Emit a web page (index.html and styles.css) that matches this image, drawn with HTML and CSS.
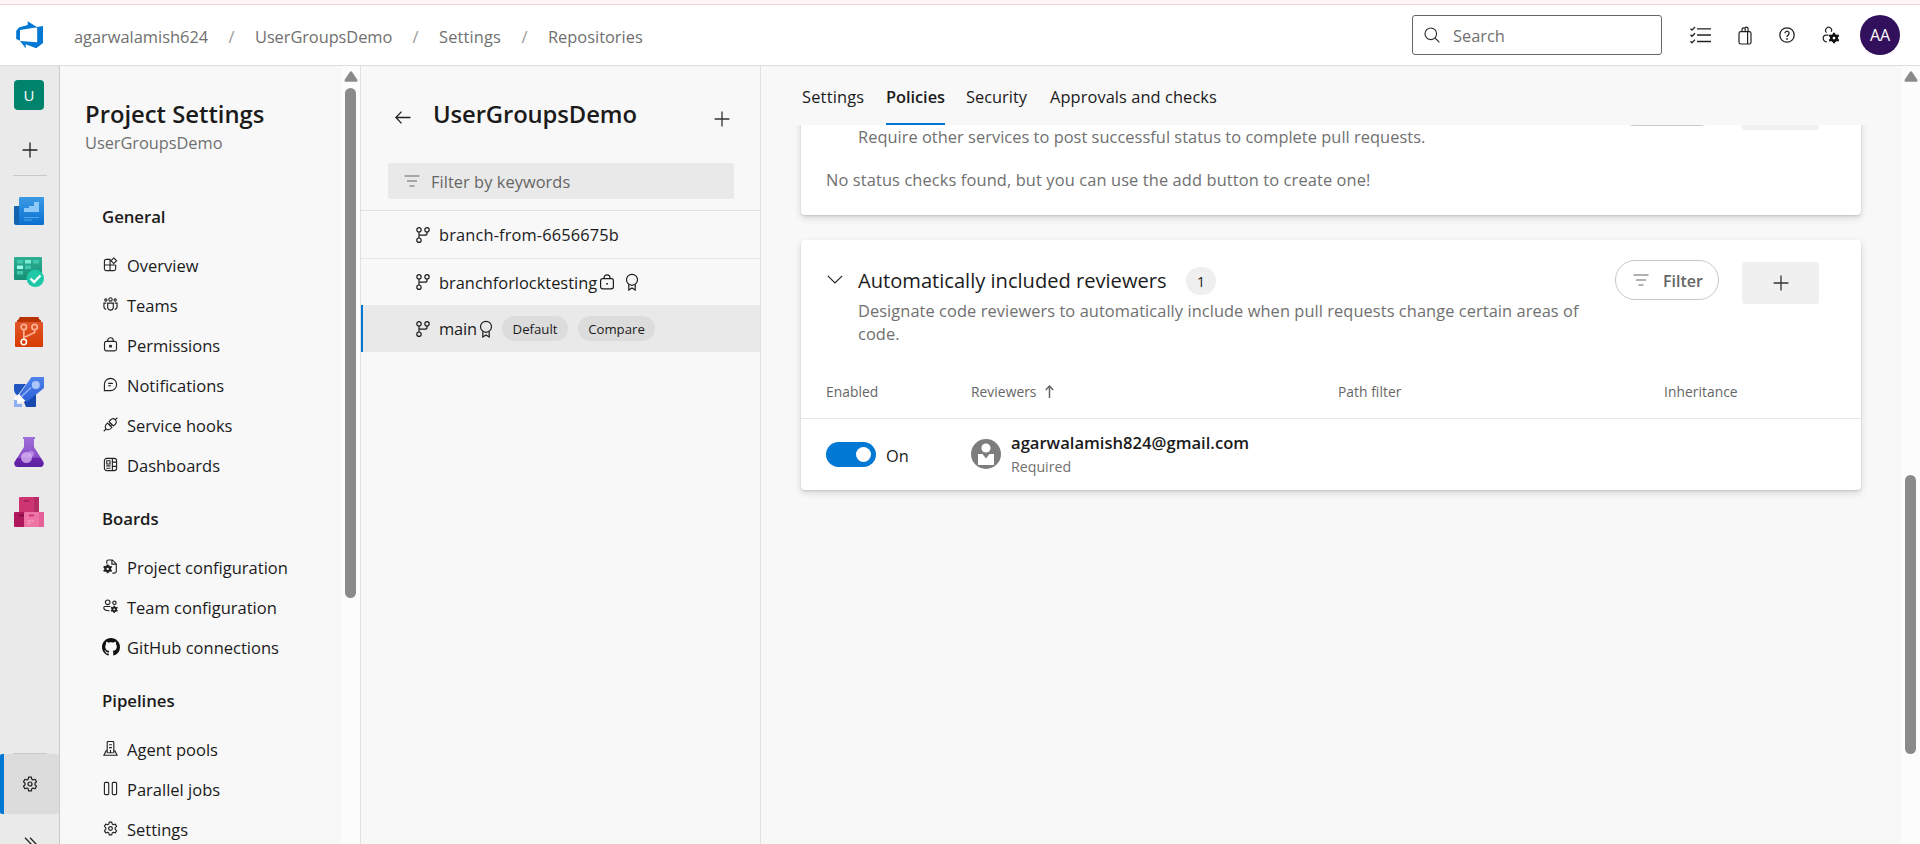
FILE: index.html
```html
<!DOCTYPE html>
<html lang="en">
<head>
<meta charset="utf-8">
<title>Repositories - Settings</title>
<link rel="stylesheet" href="styles.css">
</head>
<body>
<svg class="defs" width="0" height="0">
  <defs>
    <linearGradient id="gBlue" x1="0" y1="0" x2="0" y2="1"><stop offset="0" stop-color="#3c9be4"/><stop offset="1" stop-color="#0a6fd0"/></linearGradient>
    <linearGradient id="gGreen" x1="0" y1="0" x2="0" y2="1"><stop offset="0" stop-color="#2fae92"/><stop offset="1" stop-color="#168f76"/></linearGradient>
    <linearGradient id="gOrange" x1="0" y1="0" x2="0" y2="1"><stop offset="0" stop-color="#e0562a"/><stop offset="1" stop-color="#d83b01"/></linearGradient>
    <linearGradient id="gRocket" x1="0" y1="0" x2="0" y2="1"><stop offset="0" stop-color="#4f82ea"/><stop offset="1" stop-color="#2a60d8"/></linearGradient>
    <linearGradient id="gPurple" x1="0" y1="0" x2="0" y2="1"><stop offset="0" stop-color="#a06fd8"/><stop offset=".68" stop-color="#8a4fc8"/><stop offset=".7" stop-color="#6a25ac"/><stop offset="1" stop-color="#5c1fa4"/></linearGradient>
    <symbol id="gear" viewBox="0 0 16 16"><path d="M6.6 1.2h2.8l.4 2 1.3.8 2-.7 1.400 2.400-1.500 1.400v1.800l1.500 1.400-1.400 2.400-2-.7-1.300.8-.4 2H6.600l-.4-2-1.300-.8-2 .7-1.400-2.400 1.500-1.400V7.100L1.500 5.700l1.400-2.400 2 .7 1.300-.8z" fill="none" stroke="currentColor" stroke-width="1.200" stroke-linejoin="round"/><circle cx="8" cy="8" r="2" fill="none" stroke="currentColor" stroke-width="1.200"/></symbol>
    <symbol id="cog" viewBox="0 0 16 16"><circle cx="8" cy="8" r="4" fill="none" stroke="currentColor" stroke-width="4"/><path d="M8 0v3M8 13v3M1 4l2.600 1.500M12.400 10.500L15 12M1 12l2.600-1.500M12.400 5.500L15 4" stroke="currentColor" stroke-width="3.200"/></symbol>
    <symbol id="branch" viewBox="0 0 14 16"><g fill="none" stroke="currentColor" stroke-width="1.200"><circle cx="3" cy="2.800" r="2.200"/><circle cx="11" cy="2.800" r="2.200"/><circle cx="3" cy="13.200" r="2.200"/><path d="M3 5v6M11 5v1.200q0 2-2 2H3"/></g></symbol>
    <symbol id="lock" viewBox="0 0 16 16"><g fill="none" stroke="currentColor" stroke-width="1.200"><rect x="1.600" y="4.600" width="12.800" height="10.200" rx="2"/><path d="M5 4.600V3.800a3 3 0 0 1 6 0v.8"/></g><rect x="7.200" y="9" width="1.600" height="1.600" fill="currentColor"/></symbol>
    <symbol id="ribbon" viewBox="0 0 14 18"><g fill="none" stroke="currentColor" stroke-width="1.200"><circle cx="7" cy="6.800" r="5.500"/><path d="M3.800 11.500V17L7 15l3.200 2v-5.500"/></g></symbol>
    <symbol id="plus" viewBox="0 0 16 16"><path d="M8 .6v14.800M.6 8h14.800" stroke="currentColor" stroke-width="1.300"/></symbol>
    <symbol id="filter" viewBox="0 0 16 12"><path d="M.5 1h15M3 6h10M5.500 11h5" stroke="currentColor" stroke-width="1.200"/></symbol>
  </defs>
</svg>

<div class="strip"></div>
<header class="topbar">
  <svg class="logo" viewBox="0 0 28 28"><path fill="#0078d4" d="M27 5v17l-6.800 5.300-10.500-4v3.900L4 20l17.200 1.200V6.100zM21.300 6.200L11.700.2V4L2.800 6.600.200 10v8l3.800 1.700V9.100z"/></svg>
  <nav class="crumbs">
    <span class="c1">agarwalamish624</span><i>/</i><span class="c2">UserGroupsDemo</span><i>/</i><span class="c3">Settings</span><i>/</i><span class="c4">Repositories</span>
  </nav>
  <div class="search">
    <svg width="16" height="16" viewBox="0 0 16 16"><g fill="none" stroke="#333" stroke-width="1.200"><circle cx="6.800" cy="6.800" r="5.800"/><path d="M11 11l4.400 4.400"/></g></svg>
    <span>Search</span>
  </div>
  <div class="tools">
    <svg width="21" height="18" viewBox="0 0 21 18"><g fill="none" stroke="#222" stroke-width="1.300"><path d="M7 2.800h14M7 9h14M7 15.500h14M.5 2.600l1.500 1.500L5 1M.5 8.800l1.500 1.500L5 7.200M.5 15.200l1.500 1.500 3-3.100"/></g></svg>
    <svg width="14" height="19" viewBox="0 0 14 19"><g fill="none" stroke="#222" stroke-width="1.200"><rect x="1" y="5.600" width="12" height="12.400" rx="1.800"/><path d="M9.600 5.600V18M4 5.600V3.500a1.600 1.600 0 0 1 3.200 0v2.100M7 2.200a1.600 1.600 0 0 1 3 1.300v2.100"/></g></svg>
    <svg width="16" height="16" viewBox="0 0 16 16"><g fill="none" stroke="#222" stroke-width="1.300"><circle cx="8" cy="8" r="7.200"/><path d="M5.900 6.200a2.100 2.100 0 1 1 3.200 1.900Q8 8.700 8 9.900"/></g><circle cx="8" cy="11.900" r=".9" fill="#222"/></svg>
    <svg width="18" height="18" viewBox="0 0 18 18" color="#111"><path d="M4.600 6.600A3 3 0 1 1 9.200 5.800M6.500 9.200H4q-2.800 0-2.800 3t3.600 3.600" fill="none" stroke="#222" stroke-width="1.200"/><use href="#cog" x="6.500" y="6.500" width="11" height="11"/></svg>
  </div>
  <div class="me">AA</div>
</header>

<div class="body">
  <aside class="rail">
    <div class="tile">U</div>
    <svg class="add" width="16" height="16"><use href="#plus"/></svg>
    <div class="sep"></div>
    <div class="apps">
      <svg viewBox="0 0 30 30"><path fill="#1362ae" d="M0 10q0-1 1-1h5v19H2q-2 0-2-2z"/><path fill="url(#gBlue)" d="M6 0h23q1 0 1 1v26q0 1-1 1H3q2-.5 2-3V1q0-1 1-1z"/><path fill="#8cc8f8" d="M10 15v-4h5V9h5V5h5v10z"/><path fill="#4fa6ee" d="M10 20h15v1H10zM10 22.400h8v1H10z"/></svg>
      <svg viewBox="0 0 30 30"><rect width="28" height="23" rx="1" fill="url(#gGreen)"/><path fill="#3fc8ac" d="M3 3h6v3.500H3zM19 3h6v3.500h-6zM11 8.500h6v3.500h-6zM3 14h6v3.500H3z"/><path fill="#7deed4" d="M11 3h6v3.500h-6z"/><path fill="#9afbe4" d="M3 8.500h6v3.500H3z"/><circle cx="21.300" cy="21.300" r="8.700" fill="#1ec7a6"/><path d="M16.500 21.500l3.600 3.600 6.400-6.600" fill="none" stroke="#fff" stroke-width="2.300"/></svg>
      <svg viewBox="0 0 30 30"><path fill="#b83202" d="M6 0h18q1 0 1 2l2 1.500V6H3V3.500L5 2q0-2 1-2z"/><rect x="1" y="5" width="28" height="25" rx="1" fill="url(#gOrange)"/><g fill="none" stroke="#ffb295" stroke-width="1.700"><circle cx="9.800" cy="10" r="2.700"/><circle cx="20.600" cy="10" r="2.700"/><path d="M9.800 13v9M20.600 13v2.500L10 20.500"/></g><circle cx="9.800" cy="25" r="2.700" fill="none" stroke="#fff" stroke-width="1.500"/></svg>
      <svg viewBox="0 0 30 30"><path fill="#1f55c0" d="M0 8q0-1 1-1h11L4 18H3Q0 16 0 12z"/><path fill="#1847ae" d="M22 15v14q0 1-1 1h-9l-2-5z"/><path fill="url(#gRocket)" d="M17.500 0H30v11L13 25l-8-7z"/><circle cx="21.800" cy="8" r="4" fill="#abc6fb"/><path d="M7 20L17 10.500" stroke="#8db2f8" stroke-width="1.600"/><path d="M4 18l5 6.500M6 25l-5-5" stroke="#fff" stroke-width="3"/><path fill="#8eb1f6" d="M0 23h3v4h5v3H0z"/></svg>
      <svg viewBox="0 0 30 30"><path fill="url(#gPurple)" d="M9 0h12v2h-1v8l9.500 15q1.200 4-2.500 5H3q-3.700-1-2.500-5L10 10V2H9z"/><circle cx="12.500" cy="20.500" r="5.500" fill="#d8b0f2" opacity=".8"/><circle cx="17" cy="17" r="3" fill="#d8b0f2" opacity=".55"/></svg>
      <svg viewBox="0 0 30 30"><rect x="5" width="20" height="16" rx="1" fill="#cc3572"/><path fill="#b52b64" d="M20 0h4q1 0 1 1v14h-5z"/><path fill="#a8225a" d="M10 3h5v1.800h-5z"/><rect y="15" width="11" height="15" rx="1" fill="#b0185c"/><rect x="10" y="15" width="20" height="15" rx="1" fill="#ef74a6"/><path fill="#e55f98" d="M25 15h4q1 0 1 1v13q0 1-1 1h-4z"/><path fill="#7e0e40" d="M5 17.500h5v2H5z"/><path fill="#cc3572" d="M15 17.500h5v2h-5z"/><path fill="#ffa0c8" d="M13 23.500h7v1h-7zM13 26h4v1h-4z"/></svg>
    </div>
    <div class="sep low"></div>
    <div class="active"><svg width="16" height="16"><use href="#gear"/></svg></div>
    <svg class="more" width="14" height="14" viewBox="0 0 14 14"><path d="M1 .8L7 7l-6 6.200M6 .8L12 7l-6 6.200" fill="none" stroke="#222" stroke-width="1.300"/></svg>
  </aside>

  <nav class="side">
    <div class="menu">
      <h1>Project Settings</h1>
      <p class="sub">UserGroupsDemo</p>
      <h2>General</h2>
      <ul>
        <li><svg viewBox="0 0 16 16"><path d="M8 2.500H3.500q-2 0-2 2v8q0 2 2 2h8q2 0 2-2V8.500M1.500 8.500h12M7.500 2.500v12M11.500 1l3 3-3 3-3-3z"/></svg>Overview</li>
        <li><svg viewBox="0 0 16 16"><circle cx="8" cy="2.600" r="1.800"/><circle cx="3" cy="3.200" r="1.200"/><circle cx="13" cy="3.200" r="1.200"/><path d="M5 6.500h6v4.500a3 3 0 0 1-6 0zM3.500 6.500H1v4q0 2.300 2.500 2.800M12.500 6.500H15v4q0 2.300-2.500 2.800"/></svg>Teams</li>
        <li><svg><use href="#lock"/></svg>Permissions</li>
        <li><svg viewBox="0 0 16 16"><path d="M1.500 14.500V8A6.500 6.500 0 1 1 8 14.500zM5.500 6.800h5M5.500 9.300h3"/></svg>Notifications</li>
        <li><svg viewBox="0 0 16 16"><path d="M.8 15.200l2.500-2.500M3.200 12.800Q1 9.500 4.800 6.500L9.500 11.200Q6.500 15 3.200 12.800zM6.500 5Q10-.2 13.200 3 16 6 11.200 9.500zM13 3l2.300-2.300M6.500 8.200L8 6.700M8 9.500L9.500 8"/></svg>Service hooks</li>
        <li><svg viewBox="0 0 16 16"><rect x="1.500" y="1.500" width="13" height="13" rx="2.500"/><path d="M10 1.500v13M4 4h3.500v3.500H4zM3.500 9.500h4.500M3.500 12h4.500M10 5.500h4.500M10 10h4.500"/></svg>Dashboards</li>
      </ul>
      <h2>Boards</h2>
      <ul>
        <li><svg viewBox="0 0 16 16" class="mix"><path d="M4 5V3q0-2 2-2h4l4.200 4.200V13q0 2-2 2H10M9.500 1v4.500H14"/><use href="#cog" x="0" y="5.500" width="10" height="10"/></svg>Project configuration</li>
        <li><svg viewBox="0 0 16 16" class="mix"><circle cx="5" cy="3.500" r="2.500"/><circle cx="12.200" cy="4" r="1.800"/><path d="M8 8H2Q.8 8 .8 9.500 1.500 12.800 7 12.500"/><use href="#cog" x="8" y="7" width="8" height="8"/></svg>Team configuration</li>
        <li><svg viewBox="0 0 16 16" class="gh"><path d="M8 0C3.580 0 0 3.580 0 8c0 3.540 2.290 6.530 5.470 7.590.4.070.55-.17.55-.38 0-.19-.01-.82-.01-1.490-2.010.37-2.530-.49-2.690-.94-.09-.23-.48-.94-.82-1.130-.28-.15-.68-.52-.01-.53.63-.01 1.080.58 1.230.82.72 1.210 1.870.87 2.330.66.07-.52.28-.87.51-1.070-1.780-.2-3.640-.89-3.640-3.950 0-.87.31-1.590.82-2.150-.08-.2-.36-1.020.08-2.120 0 0 .67-.21 2.200.82.64-.18 1.320-.27 2-.27s1.360.09 2 .27c1.530-1.040 2.200-.82 2.200-.82.44 1.100.16 1.920.08 2.120.51.56.82 1.270.82 2.150 0 3.070-1.870 3.750-3.650 3.950.29.25.54.73.54 1.480 0 1.070-.01 1.930-.01 2.200 0 .21.15.46.55.38A8.010 8.010 0 0 0 16 8c0-4.420-3.580-8-8-8z"/></svg>GitHub connections</li>
      </ul>
      <h2>Pipelines</h2>
      <ul>
        <li><svg viewBox="0 0 16 16"><path d="M4.500 13V1.500q0-1 1-1h5q1 0 1 1V13M6.500 4h3M6.500 7h3M8 9.500v3.500M5.500 12.500h5M4.500 10.500H3.300L1 15.200h14l-2.300-4.700h-1.200"/></svg>Agent pools</li>
        <li><svg viewBox="0 0 16 16"><rect x="1.500" y="1.500" width="4.600" height="13" rx="1.200"/><rect x="9.900" y="1.500" width="4.600" height="13" rx="1.200"/></svg>Parallel jobs</li>
        <li><svg><use href="#gear"/></svg>Settings</li>
      </ul>
    </div>
    <div class="bar"><svg width="14" height="11" viewBox="0 0 14 11"><path d="M6 .8q1-1.200 2 0l5.300 8q.7 1.700-1 1.900H1.700Q0 10.500.7 8.800z" fill="#8a8a8a"/></svg><div class="thumb side-thumb"></div></div>
  </nav>

  <section class="branches">
    <div class="bhead">
      <svg width="16" height="13" viewBox="0 0 16 13"><path d="M6.500.6L.9 6.500l5.600 5.900M.9 6.500h14.600" fill="none" stroke="#222" stroke-width="1.300"/></svg>
      <h1>UserGroupsDemo</h1>
      <svg class="plus" width="16" height="16"><use href="#plus"/></svg>
    </div>
    <div class="keyword"><svg width="16" height="12"><use href="#filter"/></svg><span>Filter by keywords</span></div>
    <div class="row first"><svg width="14" height="16"><use href="#branch"/></svg><span class="b1">branch-from-6656675b</span></div>
    <div class="row second"><svg width="14" height="16"><use href="#branch"/></svg><span class="b2">branchforlocktesting</span><svg class="lk" width="16" height="16"><use href="#lock"/></svg><svg class="rb" width="14" height="18"><use href="#ribbon"/></svg></div>
    <div class="row chosen"><svg width="14" height="16"><use href="#branch"/></svg><span class="b3">main</span><svg class="rb2" width="14" height="18"><use href="#ribbon"/></svg><b class="pill p1">Default</b><b class="pill p2">Compare</b></div>
  </section>

  <main>
    <div class="tabs"><span class="t1">Settings</span><span class="t2">Policies</span><span class="t3">Security</span><span class="t4">Approvals and checks</span></div>
    <div class="scroll">
      <article class="card status">
        <div class="actions"><div class="fbtn"></div><div class="abtn"></div></div>
        <p class="d1">Require other services to post successful status to complete pull requests.</p>
        <p class="d2">No status checks found, but you can use the add button to create one!</p>
      </article>
      <article class="card">
        <div class="chead">
          <svg class="chev" width="16" height="9" viewBox="0 0 16 9"><path d="M.8.800L8 8l7.200-7.200" fill="none" stroke="#222" stroke-width="1.200"/></svg>
          <div class="info">
            <div class="title"><h3>Automatically included reviewers</h3><span class="count">1</span></div>
            <p class="desc">Designate code reviewers to automatically include when pull requests change certain areas of code.</p>
          </div>
          <div class="actions"><div class="fbtn"><svg width="16" height="12"><use href="#filter"/></svg><span>Filter</span></div><div class="abtn"><svg width="16" height="16"><use href="#plus"/></svg></div></div>
        </div>
        <div class="grid head"><span>Enabled</span><span class="rv">Reviewers<svg width="9" height="13" viewBox="0 0 9 13"><path d="M4.500 13V1.200M.8 5l3.700-4 3.700 4" fill="none" stroke="#666" stroke-width="1.500"/></svg></span><span>Path filter</span><span>Inheritance</span></div>
        <div class="grid data">
          <div class="toggle"><div class="track"><div class="knob"></div></div><span>On</span></div>
          <div class="person">
            <svg width="30" height="30" viewBox="0 0 30 30"><circle cx="15" cy="15" r="15" fill="#7d7d7d"/><circle cx="15" cy="9" r="4.600" fill="#fff"/><path fill="#fff" d="M7 15h4.500L15 19.500 18.500 15H23v11H7z"/></svg>
            <div><div class="mail">agarwalamish824@gmail.com</div><div class="req">Required</div></div>
          </div>
        </div>
      </article>
    </div>
  </main>
  <div class="bar page"><svg width="14" height="11" viewBox="0 0 14 11"><path d="M6 .8q1-1.200 2 0l5.300 8q.7 1.700-1 1.900H1.700Q0 10.500.7 8.800z" fill="#8a8a8a"/></svg><div class="thumb page-thumb"></div></div>
</div>
</body>
</html>
```
FILE: styles.css
```css
* { box-sizing: border-box; }
body { margin: 0; width: 1920px; height: 844px; overflow: hidden; background: #f8f8f8; color: #1b1b1b; font: 16.4px/24px "Open Sans", "Noto Sans", sans-serif; }
h1, h2, h3, p, ul { margin: 0; padding: 0; font-weight: 400; }
ul { list-style: none; }
svg { display: block; flex: none; }
span, b, i, li, h1, h2, h3 { white-space: nowrap; }
.defs { height: 0; }
.strip { height: 5px; background: #fff7f5; border-bottom: 1px solid #f3d3d6; }

.topbar { height: 61px; display: flex; align-items: center; background: #fff; border-bottom: 1px solid #dedede; }
.logo { width: 28px; height: 28px; margin: 0 0 0 16px; }
.crumbs { display: flex; margin-left: 30px; color: #707070; padding-top: 3px; }
.crumbs i { font-style: normal; width: 47px; text-align: center; color: #9a9a9a; }
.c1 { width: 134px; }
.c2 { width: 137px; letter-spacing: -.07px; }
.c3 { width: 62px; letter-spacing: .15px; }
.c4 { width: 95px; }
.search { margin-left: auto; width: 250px; height: 40px; border: 1px solid #666; border-radius: 3px; display: flex; align-items: center; padding-left: 11px; gap: 13px; color: #707070; }
.search span { padding-top: 2px; }
.tools { display: flex; align-items: center; margin-left: 28px; gap: 27px; }
.me { width: 40px; height: 40px; margin: 0 20px 0 20px; border-radius: 50%; background: #33105c; color: #fff; text-align: center; line-height: 40px; font-size: 16px; }

.body { display: flex; height: 778px; }
.rail { width: 60px; background: #eaeaea; border-right: 1px solid #cbcbcb; display: flex; flex-direction: column; align-items: flex-start; overflow: hidden; }
.tile { width: 30px; height: 30px; margin: 14px 0 0 14px; border-radius: 4px; background: #00836c; color: #fff; text-align: center; line-height: 30px; font-size: 15px; flex: none; }
.add { margin: 32px 0 0 22px; color: #222; }
.sep { width: 34px; height: 1px; background: #c9c9c9; margin: 17px 0 0 13px; flex: none; }
.apps { display: flex; flex-direction: column; gap: 30px; margin: 21px 0 0 14px; }
.apps svg { width: 30px; height: 30px; }
.sep.low { margin-top: 226px; }
.active { width: 59px; height: 60px; background: #dcdcdc; border-left: 4px solid #0078d4; border-radius: 2px; display: flex; align-items: center; padding-left: 18px; flex: none; }
.more { margin: 23px 0 0 24px; }

.side { width: 301px; display: flex; border-right: 1px solid #e0e0e0; overflow: hidden; }
.menu { width: 281px; padding: 33px 0 0 25px; }
h1 { font-size: 23.800px; font-weight: 600; line-height: 30px; letter-spacing: -.1px; }
.menu h1 { letter-spacing: 0; }
.sub { color: #707070; padding-top: 2px; letter-spacing: -.05px; }
h2 { font-size: 16.800px; font-weight: 600; line-height: 24px; margin: 50px 0 17px 17px; letter-spacing: -.05px; }
ul + h2 { margin-top: 21px; margin-bottom: 17px; }
li { height: 40px; display: flex; align-items: center; padding-left: 18px; gap: 9px; font-size: 16.500px; }
li svg { width: 15px; height: 15px; fill: none; stroke: #222; stroke-width: 1.200; margin-top: -3px; color: #222; }
.mix use { stroke-width: 0; }
.gh { fill: #111; stroke: none; width: 18px; height: 18px; margin: -3px -2px 0 -1px; }
.bar { width: 19px; background: #fcfcfc; display: flex; flex-direction: column; align-items: center; padding-top: 5px; flex: none; }
.thumb { width: 11px; border-radius: 6px; background: #8a8a8a; flex: none; }
.side-thumb { height: 510px; margin-top: 6px; }

.branches { width: 400px; border-right: 1px solid #e0e0e0; }
.bhead { display: flex; height: 97px; padding: 33px 30px 0 34px; align-items: flex-start; }
.bhead svg { margin-top: 12px; }
.bhead h1 { margin-left: 22px; flex: 1; }
.bhead .plus { margin-top: 12px; color: #333; }
.keyword { margin: 0 0 11px 27px; width: 346px; height: 36px; background: #e9e9e9; border-radius: 3px; display: flex; align-items: center; gap: 11px; padding-left: 16px; color: #666; }
.keyword span { padding-top: 2px; letter-spacing: .05px; }
.row { display: flex; align-items: center; height: 47px; padding-left: 55px; }
.row > span { margin-left: 9px; padding-top: 1px; }
.first { height: 49px; border-top: 1px solid #e0e0e0; border-bottom: 1px solid #e6e6e6; }
.b1 { letter-spacing: .14px; }
.second { height: 46px; }
.chosen { background: #e9e9e9; border-left: 2px solid #0078d4; padding-left: 53px; }
.b2 { width: 159px; }
.b3 { width: 38px; letter-spacing: -.1px; }
.rb { margin-left: 10px; }
.rb2 { margin-left: 2px; }
.lk { margin-left: 1px; }
.pill { height: 25px; border-radius: 13px; background: #dcdcdc; font-weight: 400; font-size: 13.200px; line-height: 27px; text-align: center; }
.p1 { width: 66px; margin-left: 9px; }
.p2 { width: 77px; margin-left: 10px; }

main { width: 1140px; display: flex; flex-direction: column; overflow: hidden; }
.tabs { height: 59px; display: flex; padding-left: 41px; flex: none; line-height: 61px; }
.tabs span { height: 59px; }
.t1 { width: 62px; letter-spacing: .2px; }
.t2 { width: 59px; margin: 0 21px 0 22px; font-weight: 600; border-bottom: 2px solid #0078d4; letter-spacing: -.05px; }
.t3 { width: 62px; margin-right: 22px; }
.t4 { letter-spacing: .08px; }
.scroll { flex: 1; overflow: hidden; padding-left: 40px; }
.card { width: 1060px; background: #fff; border-radius: 4px; box-shadow: 0 3px 7px rgba(0,0,0,.14), 0 1px 2px rgba(0,0,0,.12); height: 250px; }
.status { margin: -59px 0 25px; height: 149px; padding-top: 20px; color: #707070; }
.actions { display: flex; gap: 23px; justify-content: flex-end; padding-right: 42px; height: 44px; }
.fbtn { width: 104px; height: 40px; border: 1px solid #c8c8c8; border-radius: 20px; display: flex; align-items: center; gap: 14px; padding-left: 17px; font-weight: 600; color: #666; font-size: 16px; }
.fbtn span { padding-top: 1px; }
.abtn { width: 77px; height: 42px; margin-top: 2px; background: #f0f0f0; border-radius: 3px; display: flex; align-items: center; justify-content: center; color: #333; }
.d1 { padding-left: 57px; margin-top: -5px; letter-spacing: .035px; }
.d2 { padding-left: 25px; margin-top: 19px; letter-spacing: .12px; }
.chead { display: flex; height: 125px; padding-top: 20px; }
.chev { margin: 15px 0 0 26px; }
.info { width: 755px; margin-left: 15px; padding-top: 7px; }
.title { display: flex; align-items: center; height: 28px; }
h3 { font-size: 20.100px; width: 307px; line-height: 26px; padding-bottom: 1px; }
.count { width: 30px; height: 28px; border-radius: 14px; margin-left: 21px; background: #efefef; text-align: center; line-height: 30px; font-size: 14px; }
.desc { color: #707070; line-height: 23px; margin-top: 4px; width: 740px; letter-spacing: .07px; }
.chead .actions { flex: 1; }
.grid { display: grid; grid-template-columns: 145px 367px 326px 1fr; padding-left: 25px; }
.head { height: 54px; border-bottom: 1px solid #e6e6e6; font-size: 13.800px; font-weight: 500; color: #666; line-height: 53px; letter-spacing: .05px; }
.head > span { height: 53px; }
.rv { display: flex; align-items: center; gap: 8px; }
.data { height: 71px; align-items: center; }
.toggle { display: flex; align-items: center; gap: 10px; }
.track { width: 50px; height: 25px; border-radius: 13px; background: #0078d4; padding: 5px 5px 0 30px; }
.knob { width: 15px; height: 15px; border-radius: 50%; background: #fff; }
.toggle span { padding-top: 2px; }
.person { display: flex; align-items: center; gap: 10px; }
.person svg { margin-top: -1px; }
.mail { font-weight: 600; font-size: 16.600px; line-height: 23px; }
.req { font-size: 14.200px; color: #707070; line-height: 23px; padding-top: 1px; }
.page-thumb { height: 279px; margin-top: 393px; }
```
